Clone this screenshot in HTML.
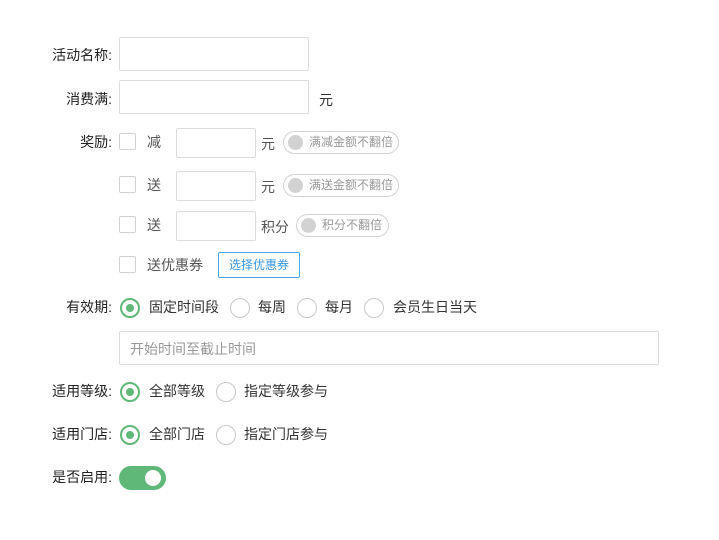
<!DOCTYPE html>
<html><head><meta charset="utf-8"><style>
*{margin:0;padding:0;box-sizing:border-box}
body{width:719px;height:540px;background:#fff;font-family:"Liberation Sans","Noto Sans CJK SC",sans-serif;font-size:14px;color:#333;position:relative;overflow:hidden}
.a{position:absolute;white-space:nowrap;line-height:16px}
.lbl{position:absolute;right:607px;text-align:right;white-space:nowrap;line-height:16px;color:#222}
.in{position:absolute;border:1px solid #dcdcdc;border-radius:2px;background:#fff}
.cb{position:absolute;width:17px;height:17px;border:1px solid #d2d2d2;border-radius:2px}
.g{color:#555}
.tg{position:absolute;height:23px;border:1px solid #d2d2d2;border-radius:12px;color:#999;font-size:12px;line-height:21px;padding-left:25px}
.tg:before{content:"";position:absolute;left:4px;top:3px;width:15px;height:15px;border-radius:50%;background:#d2d2d2}
.r{position:absolute;width:20px;height:20px;border:1px solid #c8c8c8;border-radius:50%}
.r.on{border:2px solid #5fb878}
.r.on:after{content:"";position:absolute;left:4px;top:4px;width:8px;height:8px;border-radius:50%;background:#5fb878}
</style></head><body>
<div class="lbl" style="top:47px">活动名称:</div>
<div class="in" style="left:119px;top:37px;width:190px;height:34px"></div>
<div class="lbl" style="top:91px">消费满:</div>
<div class="in" style="left:119px;top:80px;width:190px;height:34px"></div>
<div class="a" style="left:319px;top:92px">元</div>

<div class="lbl" style="top:134px">奖励:</div>
<div class="cb" style="left:119px;top:133px"></div><div class="a g" style="left:147px;top:134px">减</div>
<div class="in" style="left:176px;top:128px;width:80px;height:30px"></div>
<div class="a g" style="left:261px;top:136px">元</div>
<div class="tg" style="left:283px;top:131px;width:116px">满减金额不翻倍</div>

<div class="cb" style="left:119px;top:176px"></div><div class="a g" style="left:147px;top:177px">送</div>
<div class="in" style="left:176px;top:171px;width:80px;height:30px"></div>
<div class="a g" style="left:261px;top:179px">元</div>
<div class="tg" style="left:283px;top:174px;width:116px">满送金额不翻倍</div>

<div class="cb" style="left:119px;top:216px"></div><div class="a g" style="left:147px;top:217px">送</div>
<div class="in" style="left:176px;top:211px;width:80px;height:30px"></div>
<div class="a g" style="left:261px;top:219px">积分</div>
<div class="tg" style="left:296px;top:214px;width:93px">积分不翻倍</div>

<div class="cb" style="left:119px;top:256px"></div><div class="a g" style="left:147px;top:257px">送优惠券</div>
<div style="position:absolute;left:218px;top:252px;width:82px;height:26px;border:1px solid #4ea6e8;border-radius:2px;color:#3a96df;font-size:12px;line-height:24px;text-align:center">选择优惠券</div>

<div class="lbl" style="top:299px">有效期:</div>
<div class="r on" style="left:120px;top:298px"></div><div class="a" style="left:149px;top:299px">固定时间段</div>
<div class="r" style="left:230px;top:298px"></div><div class="a" style="left:258px;top:299px">每周</div>
<div class="r" style="left:297px;top:298px"></div><div class="a" style="left:325px;top:299px">每月</div>
<div class="r" style="left:364px;top:298px"></div><div class="a" style="left:393px;top:299px">会员生日当天</div>
<div class="in" style="left:119px;top:331px;width:540px;height:34px"></div>
<div class="a" style="left:130px;top:341px;color:#999">开始时间至截止时间</div>

<div class="lbl" style="top:383px">适用等级:</div>
<div class="r on" style="left:120px;top:382px"></div><div class="a" style="left:149px;top:383px">全部等级</div>
<div class="r" style="left:216px;top:382px"></div><div class="a" style="left:244px;top:383px">指定等级参与</div>

<div class="lbl" style="top:426px">适用门店:</div>
<div class="r on" style="left:120px;top:425px"></div><div class="a" style="left:149px;top:426px">全部门店</div>
<div class="r" style="left:216px;top:425px"></div><div class="a" style="left:244px;top:426px">指定门店参与</div>

<div class="lbl" style="top:469px">是否启用:</div>
<div style="position:absolute;left:119px;top:466px;width:47px;height:24px;border-radius:12px;background:#5fb878"><div style="position:absolute;right:5px;top:4px;width:16px;height:16px;border-radius:50%;background:#fff"></div></div>
</body></html>
